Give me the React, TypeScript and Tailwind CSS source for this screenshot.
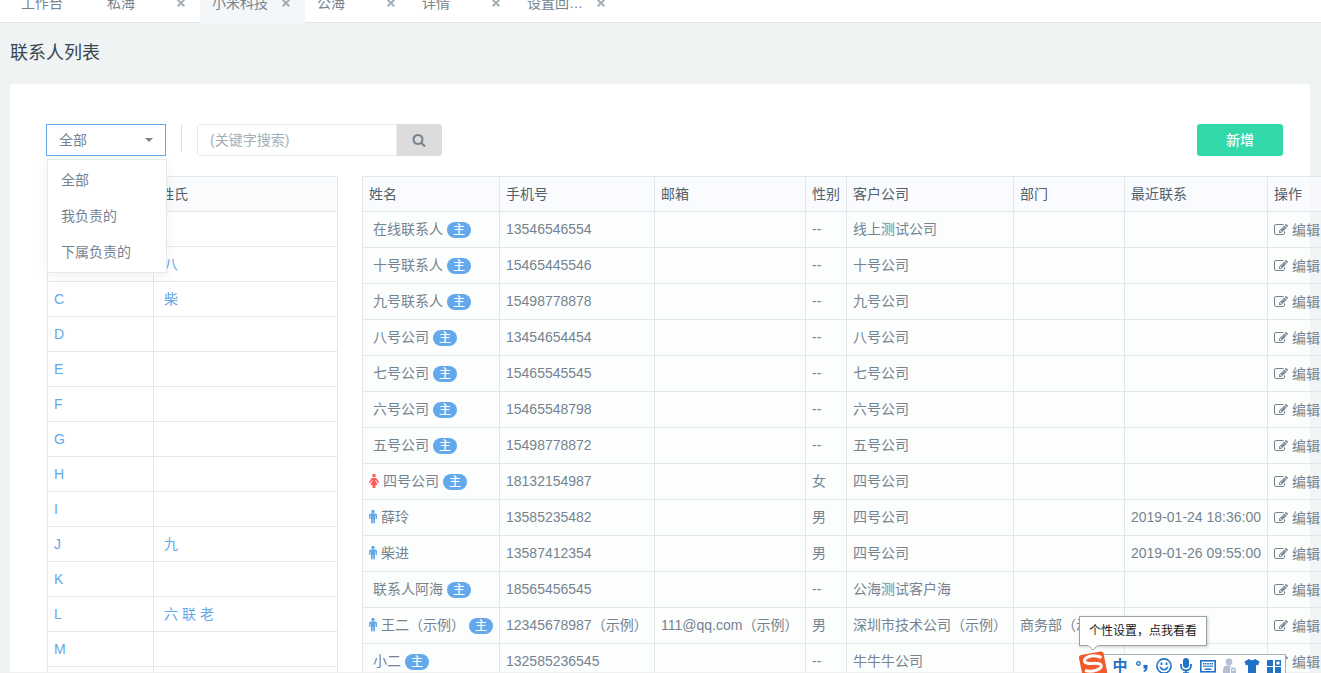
import React from "react";

const FEMALE =
  "M1536 1056q0 40-28 68t-68 28q-51 0-80-43l-227-341h-45v132l247 411q9 15 9 33 0 26-19 45t-45 19h-192v272q0 46-33 79t-79 33h-160q-46 0-79-33t-33-79v-272h-192q-26 0-45-19t-19-45q0-18 9-33l247-411v-132h-45l-227 341q-29 43-80 43-40 0-68-28t-28-68q0-29 16-53l256-384q73-107 176-107h384q103 0 176 107l256 384q16 24 16 53zm-416-864q0 93-65.5 158.5t-158.5 65.5-158.5-65.5-65.5-158.5 65.5-158.5 158.5-65.5 158.5 65.5 65.5 158.5z";
const MALE =
  "M1408 640v416q0 40-28 68t-68 28-68-28-28-68v-352h-64v912q0 46-33 79t-79 33-79-33-33-79v-464h-64v464q0 46-33 79t-79 33-79-33-33-79v-912h-64v352q0 40-28 68t-68 28-68-28-28-68v-416q0-80 56-136t136-56h640q80 0 136 56t56 136zm-288-448q0 93-65.5 158.5t-158.5 65.5-158.5-65.5-65.5-158.5 65.5-158.5 158.5-65.5 158.5 65.5 65.5 158.5z";
const EDIT =
  "M888 1184l116-116-152-152-116 116v56h96v96h56zm440-720q-16-16-33 1l-350 350q-17 17-1 33t33-1l350-350q17-17 1-33zm80 594v190q0 119-84.5 203.5t-203.5 84.5h-832q-119 0-203.5-84.5t-84.5-203.5v-832q0-119 84.5-203.5t203.5-84.5h832q63 0 117 25 15 7 18 23 3 17-9 29l-49 49q-14 14-32 8-23-6-45-6h-832q-66 0-113 47t-47 113v832q0 66 47 113t113 47h832q66 0 113-47t47-113v-126q0-13 9-22l64-64q15-15 35-7t20 29zm-96-738l288 288-672 672h-288v-288zm444 132l-92 92-288-288 92-92q28-28 68-28t68 28l152 152q28 28 28 68t-28 68z";
const SEARCH =
  "M1216 832q0-185-131.5-316.5t-316.5-131.5-316.5 131.5-131.5 316.5 131.5 316.5 316.5 131.5 316.5-131.5 131.5-316.5zm512 832q0 52-38 90t-90 38q-54 0-90-38l-343-342q-179 124-399 124-143 0-273.5-55.5t-225-150-150-225-55.5-273.5 55.5-273.5 150-225 225-150 273.5-55.5 273.5 55.5 225 150 150 225 55.5 273.5q0 220-124 399l343 343q37 37 37 90z";

const tabs = [
  { label: "工作台", closable: false },
  { label: "私海", closable: true },
  { label: "小米科技", closable: true, active: true },
  { label: "公海", closable: true },
  { label: "详情", closable: true },
  { label: "设置回…", closable: true },
];

const surnames: Record<string, string[]> = { B: ["八"], C: ["柴"], J: ["九"], L: ["六", "联", "老"] };
const letters = "ABCDEFGHIJKLMN".split("");

type Contact = {
  name: string;
  main?: boolean;
  phone: string;
  mail?: string;
  sex?: "男" | "女";
  company: string;
  dept?: string;
  last?: string;
};

const contacts: Contact[] = [
  { name: "在线联系人", main: true, phone: "13546546554", company: "线上测试公司" },
  { name: "十号联系人", main: true, phone: "15465445546", company: "十号公司" },
  { name: "九号联系人", main: true, phone: "15498778878", company: "九号公司" },
  { name: "八号公司", main: true, phone: "13454654454", company: "八号公司" },
  { name: "七号公司", main: true, phone: "15465545545", company: "七号公司" },
  { name: "六号公司", main: true, phone: "15465548798", company: "六号公司" },
  { name: "五号公司", main: true, phone: "15498778872", company: "五号公司" },
  { name: "四号公司", main: true, phone: "18132154987", sex: "女", company: "四号公司" },
  { name: "薛玲", phone: "13585235482", sex: "男", company: "四号公司", last: "2019-01-24 18:36:00" },
  { name: "柴进", phone: "13587412354", sex: "男", company: "四号公司", last: "2019-01-26 09:55:00" },
  { name: "联系人阿海", main: true, phone: "18565456545", company: "公海测试客户海" },
  {
    name: "王二（示例）",
    main: true,
    phone: "12345678987（示例）",
    mail: "111@qq.com（示例）",
    sex: "男",
    company: "深圳市技术公司（示例）",
    dept: "商务部（示例）",
  },
  { name: "小二", main: true, phone: "132585236545", company: "牛牛牛公司" },
];

const columns = ["姓名", "手机号", "邮箱", "性别", "客户公司", "部门", "最近联系", "操作"];

function TabBar() {
  return (
    <nav className="flex h-[23px] shrink-0 items-end border-b border-[#e0e6e8] bg-white">
      {tabs.map((t) => (
        <div
          key={t.label}
          className={
            "-mb-px flex h-10 items-center justify-between pr-[15px] " +
            (t.active ? "w-[105px] bg-[#f3f7f9] pl-3" : t.closable ? "w-[105px] pl-3" : "w-[95px] pl-[21px]")
          }
        >
          <a href="#" className="whitespace-nowrap">
            {t.label}
          </a>
          {t.closable && (
            <button type="button" aria-label="关闭" className="text-[#a3afb7]">
              <svg viewBox="0 0 8 8" className="size-2" stroke="currentColor" strokeWidth="2">
                <path d="M.7.7l6.600 6.600M7.300.7l-6.600 6.600" />
              </svg>
            </button>
          )}
        </div>
      ))}
    </nav>
  );
}

function Toolbar() {
  return (
    <div className="flex items-start">
      <div className="relative">
        <select
          aria-label="范围"
          className="h-8 w-[120px] appearance-none border border-[#62a8ea] bg-white px-3 text-sm outline-none"
        >
          <option>全部</option>
          <option>我负责的</option>
          <option>下属负责的</option>
        </select>
        <svg viewBox="0 0 8 4" className="pointer-events-none absolute top-3.5 right-[13px] h-1 w-2" fill="currentColor">
          <path d="M0 0h8l-4 4z" />
        </svg>
        <ul className="absolute top-[35px] left-px z-10 w-[120px] border border-[#e4eaec] bg-white py-0.5 shadow-[0_3px_12px_rgba(0,0,0,0.06)]">
          {["全部", "我负责的", "下属负责的"].map((o) => (
            <li key={o}>
              <a href="#" className="block px-[13px] leading-9">
                {o}
              </a>
            </li>
          ))}
        </ul>
      </div>
      <span className="ml-[15px] h-7 w-px bg-[#dbe3e7]" />
      <form className="ml-[15px] flex h-8" onSubmit={(e) => e.preventDefault()}>
        <input
          type="text"
          aria-label="关键字搜索"
          placeholder="(关键字搜索)"
          className="w-[200px] rounded-l-[3px] border border-[#e4eaec] bg-white px-3 text-sm placeholder-[#a3afb7] outline-none"
        />
        <button
          type="submit"
          aria-label="搜索"
          className="flex w-[45px] items-center justify-center rounded-r-[3px] bg-[#dcdcdc] pr-0.5"
        >
          <svg viewBox="0 0 1792 1792" className="size-3.5" fill="currentColor">
            <path d={SEARCH} />
          </svg>
        </button>
      </form>
      <button type="button" className="ml-auto h-8 w-[86px] rounded-[3px] bg-[#32d7aa] font-medium text-white">
        新增
      </button>
    </div>
  );
}

function LetterTable() {
  const cell = "border border-[#e2e8ea]";
  return (
    <table className="w-[291px] shrink-0 table-fixed border-collapse">
      <colgroup>
        <col className="w-[106px]" />
        <col />
      </colgroup>
      <thead>
        <tr className="h-[35px] bg-[#fafbfd] text-left text-[#526069]">
          <th className={cell + " px-1.5 font-normal"}>字母</th>
          <th className={cell + " px-1.5 font-normal"}>姓氏</th>
        </tr>
      </thead>
      <tbody>
        {letters.map((l) => (
          <tr key={l} className="h-[35px] text-[#62a8ea]">
            <td className={cell + " px-1.5"}>
              <a href="#">{l}</a>
            </td>
            <td className={cell + " px-2.5"}>
              <div className="flex gap-1">
                {(surnames[l] || []).map((s) => (
                  <a key={s} href="#">
                    {s}
                  </a>
                ))}
              </div>
            </td>
          </tr>
        ))}
      </tbody>
    </table>
  );
}

function PersonIcon({ sex }: { sex?: "男" | "女" }) {
  if (sex === "女")
    return (
      <svg viewBox="256 0 1280 1792" className="h-3.5 w-2.5" fill="#ff5b5b">
        <path d={FEMALE} />
      </svg>
    );
  if (sex === "男")
    return (
      <svg viewBox="384 0 1024 1792" className="h-3.5 w-2" fill="#62a8ea">
        <path d={MALE} />
      </svg>
    );
  return <span />;
}

function ContactTable() {
  const border = "border border-[#e2e8ea] px-1.5";
  const cell = border + " pb-0.5";
  return (
    <table className="w-[1020px] shrink-0 table-fixed border-collapse whitespace-nowrap">
      <colgroup>
        <col className="w-[137px]" />
        <col className="w-[155px]" />
        <col className="w-[151px]" />
        <col className="w-[41px]" />
        <col className="w-[167px]" />
        <col className="w-[111px]" />
        <col className="w-[143px]" />
        <col />
      </colgroup>
      <thead>
        <tr className="h-[35px] bg-[#f8fafd]/70 text-left text-[#526069]">
          {columns.map((c) => (
            <th key={c} className={border + " font-normal"}>
              {c}
            </th>
          ))}
        </tr>
      </thead>
      <tbody>
        {contacts.map((c) => (
          <tr key={c.phone} className="h-9 bg-[#f0fcf8]/20">
            <td className={cell}>
              <div className="flex items-center gap-1">
                <PersonIcon sex={c.sex} />
                <a href="#">{c.name}</a>
                {c.main && (
                  <span className="mt-0.5 flex h-4 w-6 items-center justify-center rounded-full bg-[#62a8ea] text-xs font-medium text-white">
                    主
                  </span>
                )}
              </div>
            </td>
            <td className={cell}>{c.phone}</td>
            <td className={cell}>{c.mail}</td>
            <td className={cell}>{c.sex ?? "--"}</td>
            <td className={cell}>{c.company}</td>
            <td className={cell}>{c.dept}</td>
            <td className={cell}>{c.last}</td>
            <td className={border}>
              <a href="#" className="flex items-center gap-1">
                <svg viewBox="0 0 1792 1792" className="size-3.5" fill="currentColor">
                  <path d={EDIT} />
                </svg>
                编辑
              </a>
            </td>
          </tr>
        ))}
      </tbody>
    </table>
  );
}

const inputTools = [
  <span key="lang" className="text-[15px] leading-4 font-bold">
    中
  </span>,
  <svg key="punct" viewBox="0 0 12 16" className="h-4 w-3">
    <circle cx="2.500" cy="5.500" r="1.800" fill="none" stroke="currentColor" strokeWidth="1.300" />
    <path d="M7.500 7h4v3q-.3 3-3.500 4l-.7-1.200q1.900-.7 2-2.300h-1.800z" fill="currentColor" />
  </svg>,
  <svg key="smile" viewBox="0 0 16 16" className="size-4" fill="none" stroke="currentColor" strokeWidth="1.600">
    <circle cx="8" cy="8" r="7.100" />
    <path d="M4 9q4 5.500 8 0" />
    <path d="M5.500 4.500v2.500M10.500 4.500v2.500" strokeWidth="1.800" />
  </svg>,
  <svg key="mic" viewBox="0 0 12 16" className="h-4 w-3" fill="none" stroke="currentColor" strokeWidth="1.800">
    <rect x="3" y="0" width="6" height="10" rx="3" fill="currentColor" stroke="none" />
    <path d="M1 6v1.500a5 5 0 0 0 10 0v-1.500M6 12.500v3M3 15.200h6" />
  </svg>,
  <svg key="keyboard" viewBox="0 0 16 16" className="size-4" fill="none" stroke="currentColor">
    <rect x=".8" y="2.800" width="14.400" height="11" strokeWidth="1.600" />
    <path d="M3 5.800h10M3 8.300h10" strokeWidth="1.400" strokeDasharray="1.500 0.625" />
    <path d="M4.500 11.200h7" strokeWidth="1.400" />
  </svg>,
  <svg key="person" viewBox="0 0 14 16" className="h-4 w-3.5" fill="#b4bfd6">
    <circle cx="6" cy="3.800" r="3.400" />
    <path d="M0 15v-3q0-4.500 4.500-4.500h3.500v7.500z" />
    <path d="M7.500 9h4l2 2v4.500h-6z" stroke="#fff" />
    <path d="M9 12h3" stroke="#fff" />
  </svg>,
  <svg key="skin" viewBox="0 0 16 16" className="size-4" fill="currentColor">
    <path d="M5 1q3 2.500 6 0l4.500 2.500-1.500 4-2-.7v8.200h-8v-8.200l-2 .7-1.500-4z" />
  </svg>,
  <svg key="grid" viewBox="0 0 14 16" className="h-4 w-3.5" fill="currentColor">
    <path d="M0 2h6v6h-6zM0 9h6v6h-6zM8 9h6v6h-6z" />
    <path d="M8.700 2.700h4.600v4.600h-4.600z" fill="none" stroke="currentColor" strokeWidth="1.400" />
  </svg>,
];

function InputMethodBar() {
  return (
    <div className="absolute right-[35px] bottom-0 h-[57px] w-[207px] text-[#1f72c6]">
      <div className="absolute bottom-0 left-3 flex h-[19px] w-[195px] items-start overflow-hidden border border-b-0 border-[#a9b0ba] bg-white pt-[3px] pl-[17px]">
        {inputTools.map((tool) => (
          <span key={tool.key} className="flex h-4 w-[22px] shrink-0 justify-center">
            {tool}
          </span>
        ))}
      </div>
      <svg viewBox="0 0 28 22" className="absolute bottom-0 left-0 h-[22px] w-7">
        <path d="M0 7q-.3-2.300 2-3l19.500-3.500q2.500-.4 3 2l3.500 17.500v2h-25z" fill="#f15a29" />
        <path
          d="M22.500 6.500q-7-3-12.500-1-6 2.500-4 5.500 1.500 1.700 6.500 1.500 8-.7 9.500 1.500 1.500 3-4.500 5.200-6 1.800-11.500.3"
          fill="none"
          stroke="#fff"
          strokeWidth="3"
        />
      </svg>
      <div
        role="tooltip"
        className="absolute top-0 left-0 h-[30px] w-32 border border-[#9aa1a9] bg-white text-center text-xs leading-7 whitespace-nowrap text-[#1a1a1a] shadow-[1px_1px_3px_rgba(0,0,0,0.2)]"
      >
        个性设置，点我看看
        <svg viewBox="0 0 12 7" className="absolute top-7 left-[7px] h-[7px] w-3">
          <path d="M1 0l5 5 5-5" fill="#fff" stroke="#9aa1a9" />
          <path d="M1 0h10" stroke="#fff" strokeWidth="1" />
        </svg>
      </div>
    </div>
  );
}

export default function App() {
  return (
    <div className="relative flex h-screen flex-col overflow-hidden bg-[#f0f3f4] font-['Liberation_Sans','Noto_Sans_CJK_SC',sans-serif] text-sm text-[#76838f]">
      <TabBar />
      <main className="min-h-0 flex-1 overflow-hidden border-b border-[#eef0f1] pr-[11px] pl-2.5">
        <h1 className="pt-[18px] pb-[19px] text-lg leading-6 text-[#37474f]">联系人列表</h1>
        <section className="bg-white pt-10 pr-[27px] pb-10 pl-9">
          <Toolbar />
          <div className="mt-5 ml-px flex items-start gap-6">
            <LetterTable />
            <ContactTable />
          </div>
        </section>
      </main>
      <InputMethodBar />
    </div>
  );
}
